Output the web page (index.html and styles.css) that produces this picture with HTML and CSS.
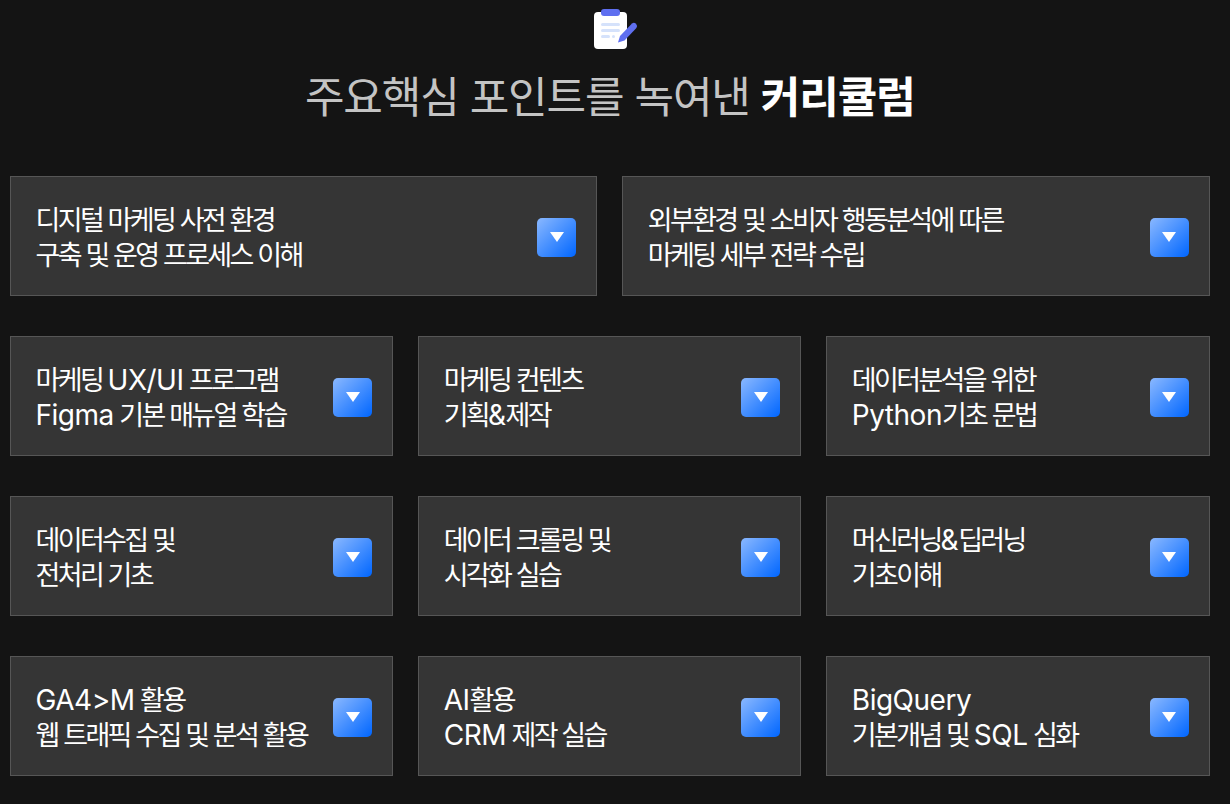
FILE: index.html
```html
<!DOCTYPE html>
<html lang="ko">
<head>
<meta charset="utf-8">
<title>커리큘럼</title>
<link rel="stylesheet" href="styles.css">
</head>
<body>
<main class="page">
  <header class="head">
    <svg class="logo" width="44" height="40" viewBox="0 0 44 40" aria-hidden="true">
      <rect x="0" y="3" width="33" height="37" rx="4" fill="#fff"/>
      <rect x="7" y="0" width="19" height="7" rx="3" fill="#5f6ff0"/>
      <rect x="7" y="14" width="19" height="3" rx="1.5" fill="#d5e2fb"/>
      <rect x="7" y="20" width="19" height="3" rx="1.5" fill="#d5e2fb"/>
      <rect x="7" y="26" width="9" height="3" rx="1.5" fill="#d5e2fb"/>
      <rect x="18" y="26" width="3" height="3" rx="1.5" fill="#d5e2fb"/>
      <path d="M24 33.5 L26 27 L38 14.5 Q40 13 42 14.8 Q44 17 42.4 19 L30.5 31.5 Z" fill="#5f6ff0"/>
    </svg>
    <h1 class="title">주요핵심 포인트를 녹여낸 <strong>커리큘럼</strong></h1>
  </header>
  <section class="rows">
    <div class="row">
      <div class="card"><p class="label">디지털 마케팅 사전 환경<br>구축 및 운영 프로세스 이해</p><span class="btn"></span></div>
      <div class="card"><p class="label">외부환경 및 소비자 행동분석에 따른<br>마케팅 세부 전략 수립</p><span class="btn"></span></div>
    </div>
    <div class="row">
      <div class="card"><p class="label">마케팅 <span class="lat">UX/UI</span> 프로그램<br><span class="lat">Figma</span> 기본 매뉴얼 학습</p><span class="btn"></span></div>
      <div class="card"><p class="label">마케팅 컨텐츠<br>기획<span class="lat">&amp;</span>제작</p><span class="btn"></span></div>
      <div class="card"><p class="label">데이터분석을 위한<br><span class="lat">Python</span>기초 문법</p><span class="btn"></span></div>
    </div>
    <div class="row">
      <div class="card"><p class="label">데이터수집 및<br>전처리 기초</p><span class="btn"></span></div>
      <div class="card"><p class="label">데이터 크롤링 및<br>시각화 실습</p><span class="btn"></span></div>
      <div class="card"><p class="label">머신러닝<span class="lat">&amp;</span>딥러닝<br>기초이해</p><span class="btn"></span></div>
    </div>
    <div class="row">
      <div class="card"><p class="label"><span class="lat">GA4&gt;M</span> 활용<br>웹 트래픽 수집 및 분석 활용</p><span class="btn"></span></div>
      <div class="card"><p class="label"><span class="lat">AI</span>활용<br><span class="lat">CRM</span> 제작 실습</p><span class="btn"></span></div>
      <div class="card"><p class="label"><span class="lat">BigQuery</span><br>기본개념 및 <span class="lat">SQL</span> 심화</p><span class="btn"></span></div>
    </div>
  </section>
</main>
</body>
</html>
```
FILE: styles.css
```css
* { box-sizing: border-box; }
html, body { margin: 0; padding: 0; }
body {
  background: #141414;
  font-family: "Noto Sans CJK KR", "Noto Sans", sans-serif;
  height: 804px;
  overflow: hidden;
}
.page { padding: 9px 20.5px 0 10px; }
.head { display: flex; flex-direction: column; align-items: center; }
.logo { display: block; margin-left: 12px; }
.title {
  margin: 15px 0 0 0;
  font-size: 43px;
  line-height: 60px;
  font-weight: 400;
  letter-spacing: -1.1px;
  color: #c4c4c4;
}
.title strong { font-weight: 700; color: #fff; }
.rows { display: flex; flex-direction: column; gap: 40px; margin-top: 52px; }
.row { display: flex; gap: 25px; }
.card {
  flex: 1 1 0;
  height: 120px;
  background: #353535;
  border: 1px solid #565656;
  display: flex;
  align-items: center;
  justify-content: space-between;
  padding: 0 20px 0 24.5px;
}
.label {
  margin: 0;
  font-size: 27px;
  line-height: 35px;
  font-weight: 400;
  letter-spacing: -2.65px;
  word-spacing: 0.6px;
  color: #fff;
  white-space: nowrap;
}
.lat {
  font-family: "Inter", "Noto Sans", sans-serif;
  font-size: 28px;
  line-height: 0;
  font-weight: 400;
  letter-spacing: -0.5px;
}
.btn {
  width: 39px;
  height: 39px;
  flex: none;
  margin-top: 2px;
  border-radius: 5px;
  background: linear-gradient(135deg, #8ab8ff, #0066ff);
  display: flex;
  align-items: center;
  justify-content: center;
}
.btn::after {
  content: "";
  width: 0;
  height: 0;
  border-left: 7.5px solid transparent;
  border-right: 7.5px solid transparent;
  border-top: 10px solid #fff;
}
```
